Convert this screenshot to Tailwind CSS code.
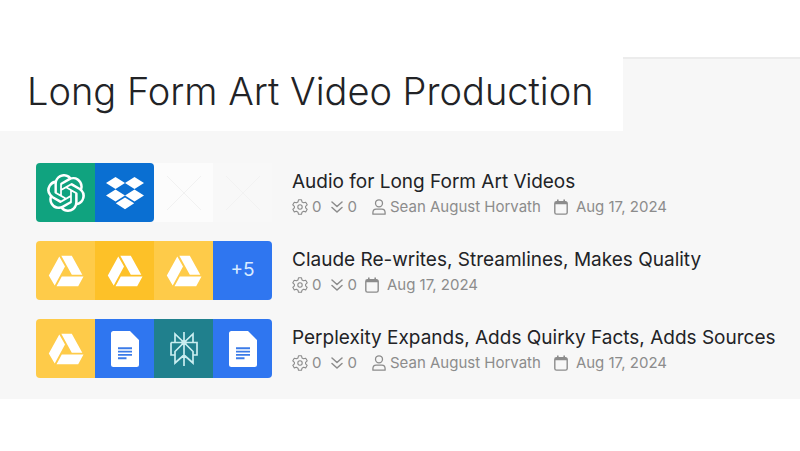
<!DOCTYPE html>
<html lang="en">
<head>
<meta charset="utf-8">
<meta name="viewport" content="width=device-width, initial-scale=1">
<title>Long Form Art Video Production</title>
<script src="https://cdn.jsdelivr.net/npm/@tailwindcss/browser@4"></script>
</head>
<body class="bg-white font-['Inter',sans-serif] text-[#222326]">
<svg class="hidden" aria-hidden="true">
  <symbol id="openai" viewBox="0 0 24 24"><path fill="currentColor" d="M22.2819 9.8211a5.9847 5.9847 0 0 0-.5157-4.9108 6.0462 6.0462 0 0 0-6.5098-2.9A6.0651 6.0651 0 0 0 4.9807 4.1818a5.9847 5.9847 0 0 0-3.9977 2.9 6.0462 6.0462 0 0 0 .7427 7.0966 5.98 5.98 0 0 0 .511 4.9107 6.051 6.051 0 0 0 6.5146 2.9001A5.9847 5.9847 0 0 0 13.2599 24a6.0557 6.0557 0 0 0 5.7718-4.2058 5.9894 5.9894 0 0 0 3.9977-2.9001 6.0557 6.0557 0 0 0-.7475-7.0729zm-9.022 12.6081a4.4755 4.4755 0 0 1-2.8764-1.0408l.1419-.0804 4.7783-2.7582a.7948.7948 0 0 0 .3927-.6813v-6.7369l2.02 1.1686a.071.071 0 0 1 .038.052v5.5826a4.504 4.504 0 0 1-4.4945 4.4944zm-9.6607-4.1254a4.4708 4.4708 0 0 1-.5346-3.0137l.142.0852 4.783 2.7582a.7712.7712 0 0 0 .7806 0l5.8428-3.3685v2.3324a.0804.0804 0 0 1-.0332.0615L9.74 19.9502a4.4992 4.4992 0 0 1-6.1408-1.6464zM2.3408 7.8956a4.485 4.485 0 0 1 2.3655-1.9728V11.6a.7664.7664 0 0 0 .3879.6765l5.8144 3.3543-2.0201 1.1685a.0757.0757 0 0 1-.071 0l-4.8303-2.7865A4.504 4.504 0 0 1 2.3408 7.872zm16.5963 3.8558L13.1038 8.364 15.1192 7.2a.0757.0757 0 0 1 .071 0l4.8303 2.7913a4.4944 4.4944 0 0 1-.6765 8.1042v-5.6772a.79.79 0 0 0-.407-.667zm2.0107-3.0231l-.142-.0852-4.7735-2.7818a.7759.7759 0 0 0-.7854 0L9.409 9.2297V6.8974a.0662.0662 0 0 1 .0284-.0615l4.8303-2.7866a4.4992 4.4992 0 0 1 6.6802 4.66zM8.3065 12.863l-2.02-1.1638a.0804.0804 0 0 1-.038-.0567V6.0742a4.4992 4.4992 0 0 1 7.3757-3.4537l-.142.0805L8.704 5.459a.7948.7948 0 0 0-.3927.6813zm1.0976-2.3654l2.602-1.4998 2.6069 1.4998v2.9994l-2.5974 1.4997-2.6067-1.4997Z"/></symbol>
  <symbol id="dropbox" viewBox="0 0 38 38"><path fill="currentColor" d="M9.5 3 19 9l-9.500 6L0 9zM28.500 3 38 9l-9.500 6L19 9zM9.500 15.500 19 21.500l-9.500 6-9.500-6zM28.500 15.500l9.500 6-9.500 6-9.500-6zM19 23.500l9.200 5.800L19 35.200l-9.200-5.900z"/></symbol>
  <symbol id="drive" viewBox="0 0 36 32"><path fill="currentColor" d="M11.300 1.500 17 11.600 6.700 30.500 0.800 20.400zM13.300 0.800h10.500l10.500 19H23.800zM13.800 21.500H35.500L30.200 31.300H8.500z"/></symbol>
  <symbol id="docs" viewBox="0 0 28 36"><path fill="currentColor" d="M2.500 0H19l9 9v24.500a2.500 2.500 0 0 1-2.500 2.500h-23A2.500 2.500 0 0 1 0 33.500v-31A2.500 2.500 0 0 1 2.500 0z"/><path stroke="#3b7be8" stroke-width="1.900" d="M7 17.300h14M7 20.600h14M7 23.900h14M7 27.200h8.500"/></symbol>
  <symbol id="perplexity" viewBox="0 0 28 36"><path fill="none" stroke="currentColor" stroke-width="1.700" d="M14 1v34M14 11.500 5 3v8.500M14 11.500 23 3v8.500M1 11.500h26V24h-4M1 11.500V24h4M14 11.500l-9 9V32l9-8M14 11.500l9 9V32l-9-8"/><path fill="currentColor" d="M11.500 9.500h5v4h-5z"/></symbol>
  <symbol id="cross" viewBox="0 0 36 36"><path fill="none" stroke="currentColor" stroke-width="1" d="M1 1l34 34M35 1 1 35"/></symbol>
  <symbol id="gear" viewBox="0 0 16 16"><g fill="none" stroke="currentColor" stroke-width="1.100" stroke-linejoin="round"><path d="M6.500 0.800h3l.5 2.100 1.600.9 2.100-.6 1.500 2.600-1.600 1.500v1.500l1.600 1.500-1.500 2.600-2.100-.6-1.600.9-.5 2.100h-3L6 13.200l-1.600-.9-2.100.6L.8 10.300l1.600-1.500V7.300L.8 5.800l1.500-2.600 2.100.6L6 2.900z"/><circle cx="8" cy="8" r="2.200"/></g></symbol>
  <symbol id="chevrons" viewBox="0 0 12 14"><path fill="none" stroke="currentColor" stroke-width="1.500" stroke-linecap="round" stroke-linejoin="round" d="M1 2l5 4.500L11 2M1 7.500 6 12l5-4.500"/></symbol>
  <symbol id="person" viewBox="0 0 14 16"><g fill="none" stroke="currentColor" stroke-width="1.300"><circle cx="7" cy="4.300" r="3.500"/><path stroke-linejoin="round" d="M.9 15.200v-1.400c0-2 1.200-3.600 3.200-3.600h5.800c2 0 3.200 1.600 3.200 3.600v1.400z"/></g></symbol>
  <symbol id="calendar" viewBox="0 0 14 16"><path fill="none" stroke="currentColor" stroke-width="1.400" d="M2.500 2.700h9A1.700 1.700 0 0 1 13.200 4.400v9a1.700 1.700 0 0 1-1.700 1.700h-9A1.700 1.700 0 0 1 .8 13.400v-9A1.700 1.700 0 0 1 2.500 2.700z"/><path fill="currentColor" d="M1 3h12v2.300H1zM3 .5h1.600V3H3zM9.400.5H11V3H9.400z"/></symbol>
</svg>

<main class="mt-[57px] border-t-2 border-[#ececec] bg-[#f7f7f7] pb-[21px]">
  <h1 class="-mt-0.5 w-fit bg-white pt-2.5 pr-[29px] pb-4 pl-[27px] text-[38px] leading-12 font-light">Long Form Art Video Production</h1>

  <ul class="flex flex-col gap-[19px] pt-8 pl-9">
    <li class="flex gap-5">
      <div class="grid w-[236px] shrink-0 grid-cols-4">
        <span class="flex h-[59px] items-center justify-center rounded-l bg-[#10a37f] text-white"><svg class="size-[38px]"><use href="#openai"/></svg></span>
        <span class="flex h-[59px] items-center justify-center rounded-r bg-[#0a6fd2] text-white"><svg class="size-[38px]"><use href="#dropbox"/></svg></span>
        <span class="flex h-[59px] items-center justify-center bg-[#fcfcfc] text-[#f1f1f1]"><svg class="size-9"><use href="#cross"/></svg></span>
        <span class="flex h-[59px] items-center justify-center bg-[#f8f8f8] text-[#f2f2f2]"><svg class="size-9"><use href="#cross"/></svg></span>
      </div>
      <div class="pt-1.5">
        <h2 class="text-[19px] leading-[26px]">Audio for Long Form Art Videos</h2>
        <div class="flex items-center text-[15px] leading-6 text-[#8c8c8c]">
          <svg class="mr-1 size-4"><use href="#gear"/></svg><span>0</span>
          <svg class="mr-1 ml-2.5 h-3.5 w-3"><use href="#chevrons"/></svg><span>0</span>
          <svg class="mr-1 ml-[15px] h-4 w-3.5"><use href="#person"/></svg><span>Sean August Horvath</span>
          <svg class="mr-2 ml-[13px] h-4 w-3.5"><use href="#calendar"/></svg><time datetime="2024-08-17">Aug 17, 2024</time>
        </div>
      </div>
    </li>
    <li class="flex gap-5">
      <div class="grid w-[236px] shrink-0 grid-cols-4 overflow-hidden rounded">
        <span class="flex h-[59px] items-center justify-center bg-[#fecb49] text-white"><svg class="h-8 w-9"><use href="#drive"/></svg></span>
        <span class="flex h-[59px] items-center justify-center bg-[#fdc128] text-white"><svg class="h-8 w-9"><use href="#drive"/></svg></span>
        <span class="flex h-[59px] items-center justify-center bg-[#fecb49] text-white"><svg class="h-8 w-9"><use href="#drive"/></svg></span>
        <span class="flex h-[59px] items-center justify-center bg-[#2f76f0] text-[19px] text-[#d9ebff]">+5</span>
      </div>
      <div class="pt-1.5">
        <h2 class="text-[19px] leading-[26px]">Claude Re-writes, Streamlines, Makes Quality</h2>
        <div class="flex items-center text-[15px] leading-6 text-[#8c8c8c]">
          <svg class="mr-1 size-4"><use href="#gear"/></svg><span>0</span>
          <svg class="mr-1 ml-2.5 h-3.5 w-3"><use href="#chevrons"/></svg><span>0</span>
          <svg class="mr-2 ml-2 h-4 w-3.5"><use href="#calendar"/></svg><time datetime="2024-08-17">Aug 17, 2024</time>
        </div>
      </div>
    </li>
    <li class="flex gap-5">
      <div class="grid w-[236px] shrink-0 grid-cols-4 overflow-hidden rounded">
        <span class="flex h-[59px] items-center justify-center bg-[#fecb49] text-white"><svg class="h-8 w-9"><use href="#drive"/></svg></span>
        <span class="flex h-[59px] items-center justify-center bg-[#2f76f0] text-white"><svg class="h-9 w-7"><use href="#docs"/></svg></span>
        <span class="flex h-[59px] items-center justify-center bg-[#20808d] text-[#c9edf0]"><svg class="h-9 w-7"><use href="#perplexity"/></svg></span>
        <span class="flex h-[59px] items-center justify-center bg-[#2f76f0] text-white"><svg class="h-9 w-7"><use href="#docs"/></svg></span>
      </div>
      <div class="pt-1.5">
        <h2 class="text-[19px] leading-[26px]">Perplexity Expands, Adds Quirky Facts, Adds Sources</h2>
        <div class="flex items-center text-[15px] leading-6 text-[#8c8c8c]">
          <svg class="mr-1 size-4"><use href="#gear"/></svg><span>0</span>
          <svg class="mr-1 ml-2.5 h-3.5 w-3"><use href="#chevrons"/></svg><span>0</span>
          <svg class="mr-1 ml-[15px] h-4 w-3.5"><use href="#person"/></svg><span>Sean August Horvath</span>
          <svg class="mr-2 ml-[13px] h-4 w-3.5"><use href="#calendar"/></svg><time datetime="2024-08-17">Aug 17, 2024</time>
        </div>
      </div>
    </li>
  </ul>
</main>
</body>
</html>
